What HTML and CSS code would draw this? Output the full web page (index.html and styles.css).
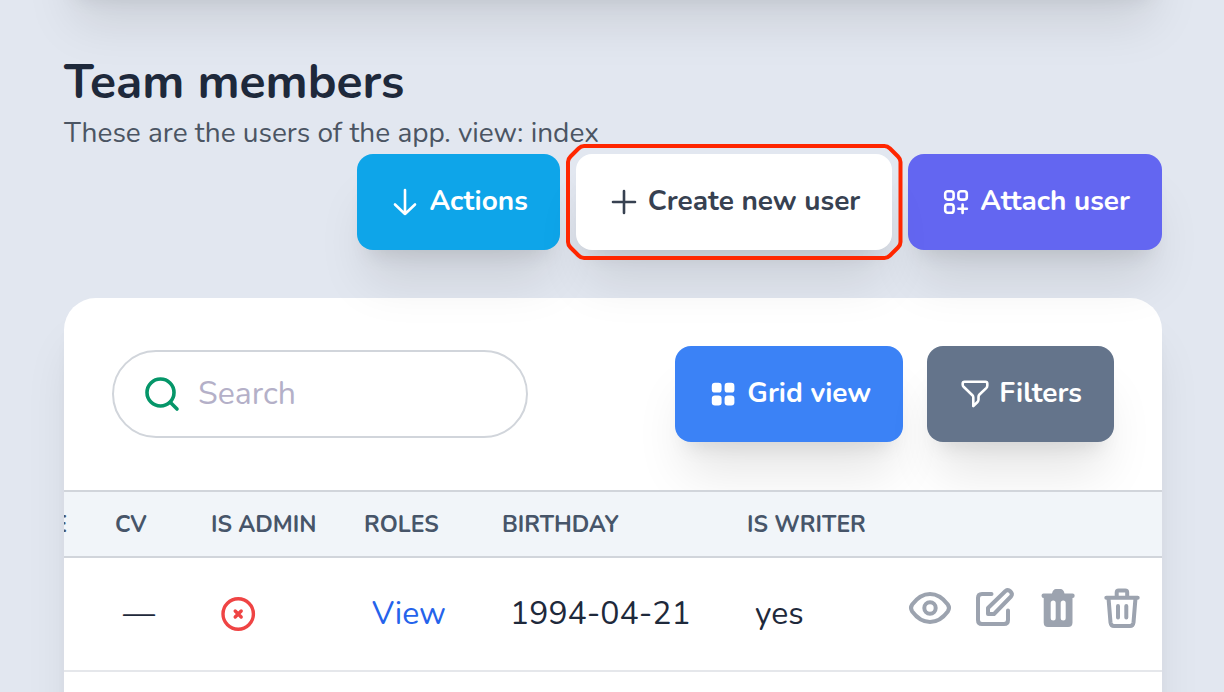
FILE: index.html
```html
<!DOCTYPE html>
<html lang="en">
<head>
  <meta charset="UTF-8">
  <meta name="viewport" content="width=device-width, initial-scale=1">
  <title>Team members</title>
  <link rel="stylesheet" href="styles.css">
</head>
<body>
  <main class="page">
    <div class="panel-end"></div>

    <header class="heading">
      <h1>Team members</h1>
      <p>These are the users of the app. view: index</p>
    </header>

    <div class="actions">
      <button type="button" class="btn btn-sky">
        <svg class="icon" viewBox="-2 -2 32 32" fill="none" stroke="currentColor" stroke-width="2.6" stroke-linecap="round" stroke-linejoin="round">
          <path d="M14 2v24M4 16.500l10 9.500 10-9.500"/>
        </svg>
        <span>Actions</span>
      </button>
      <div class="highlight">
        <button type="button" class="btn btn-white">
          <svg class="icon" viewBox="-2 -2 32 32" fill="none" stroke="currentColor" stroke-width="2.6" stroke-linecap="round">
            <path d="M14 3v22M3 14h22"/>
          </svg>
          <span>Create new user</span>
        </button>
        <svg class="highlight-ring" viewBox="0 0 336 116" preserveAspectRatio="none" aria-hidden="true">
          <path d="M18 2H318Q321 2 323.500 4.500L331.500 12.500Q334 15 334 18V98Q334 101 331.500 103.500L323.500 111.500Q321 114 318 114H18Q15 114 12.500 111.500L4.500 103.500Q2 101 2 98V18Q2 15 4.500 12.500L12.500 4.500Q15 2 18 2Z" fill="none" stroke="#ff2600" stroke-width="4" vector-effect="non-scaling-stroke"/>
        </svg>
      </div>
      <button type="button" class="btn btn-indigo">
        <svg class="icon" viewBox="-2 -2 32 32" fill="none" stroke="currentColor" stroke-width="2.6" stroke-linecap="round">
          <rect x="3.200" y="3.200" width="8.400" height="8.400" rx="2.600"/>
          <rect x="16.400" y="3.200" width="8.400" height="8.400" rx="2.600"/>
          <rect x="3.200" y="16.400" width="8.400" height="8.400" rx="2.600"/>
          <path d="M20.600 16.500v8.500M16.400 20.700h8.500"/>
        </svg>
        <span>Attach user</span>
      </button>
    </div>

    <section class="card">
      <div class="toolbar">
        <label class="search">
          <svg class="search-icon" viewBox="0 0 40 40" fill="none" stroke="currentColor" stroke-width="3.600" stroke-linecap="round">
            <circle cx="18.500" cy="18.500" r="13.500"/>
            <path d="M28.500 28.500l6.500 6.500"/>
          </svg>
          <input type="search" placeholder="Search" aria-label="Search">
        </label>
        <div class="toolbar-buttons">
          <button type="button" class="btn btn-blue">
            <svg class="icon" viewBox="-2 -2 32 32" fill="currentColor">
              <rect x="2.800" y="2.800" width="9.800" height="9.800" rx="3.200"/>
              <rect x="15.600" y="2.800" width="9.800" height="9.800" rx="3.200"/>
              <rect x="2.800" y="15.600" width="9.800" height="9.800" rx="3.200"/>
              <rect x="15.600" y="15.600" width="9.800" height="9.800" rx="3.200"/>
            </svg>
            <span>Grid view</span>
          </button>
          <button type="button" class="btn btn-slate">
            <svg class="icon" viewBox="-2 -2 32 32" fill="none" stroke="currentColor" stroke-width="2.6" stroke-linejoin="round">
              <path d="M3.500 1.800H24.500Q26.300 1.800 26.300 3.600V5.500Q26.300 7 25.200 8.100L18.500 14.500Q17.500 15.500 17.500 17V19.500Q17.500 21 16.500 22L12.300 26.200V17.500Q12.300 16.200 11.400 15.200L2.600 6.800Q1.700 5.900 1.700 4.700V3.600Q1.700 1.800 3.500 1.800Z"/>
            </svg>
            <span>Filters</span>
          </button>
        </div>
      </div>

      <div class="table-scroll">
        <table>
          <colgroup>
            <col class="col-file">
            <col class="col-cv">
            <col class="col-admin">
            <col class="col-roles">
            <col class="col-birthday">
            <col class="col-writer">
            <col>
          </colgroup>
          <thead>
            <tr>
              <th class="cut">E</th>
              <th>CV</th>
              <th>IS ADMIN</th>
              <th>ROLES</th>
              <th>BIRTHDAY</th>
              <th>IS WRITER</th>
              <th></th>
            </tr>
          </thead>
          <tbody>
            <tr>
              <td></td>
              <td>—</td>
              <td>
                <svg class="status-icon" viewBox="0 0 40 40" fill="none" stroke="currentColor" stroke-width="3.400" stroke-linecap="round" role="img" aria-label="No">
                  <circle cx="19.200" cy="20" r="15.200"/>
                  <path d="M16.200 17l6 6M22.200 17l-6 6"/>
                </svg>
              </td>
              <td><a href="#">View</a></td>
              <td>1994-04-21</td>
              <td>yes</td>
              <td class="row-actions">
                <div class="row-buttons">
                  <button type="button" aria-label="View">
                    <svg viewBox="0 0 42 40" fill="none" stroke="currentColor" stroke-width="4">
                      <path d="M4.200 16.500C9 10 15 6 22 6s13 4 17.800 10.500q2.400 3.500 0 7C35 30 29 34 22 34S9 30 4.200 23.500q-2.400-3.500 0-7z"/>
                      <circle cx="22" cy="20" r="5.700"/>
                    </svg>
                  </button>
                  <button type="button" aria-label="Edit">
                    <svg viewBox="0 0 42 40" fill="none" stroke="currentColor" stroke-width="4" stroke-linecap="round" stroke-linejoin="round">
                      <path d="M19.500 6H10Q6 6 6 10V32Q6 36 10 36H32Q36 36 36 32V22.500"/>
                      <path d="M16 26V20L33.500 3Q36 1 38.500 3.500Q41 6 39 8.500L22 26Z"/>
                    </svg>
                  </button>
                  <button type="button" aria-label="Delete">
                    <svg viewBox="0 0 42 40">
                      <path fill="currentColor" d="M16 5.500Q17 1 20 1H24.500Q27.500 1 28.500 5.500H36.500Q38.700 5.500 38.700 7.700T36.500 10V34.500Q36.500 39 32 39H12Q7.700 39 7.700 34.500V10Q5.500 10 5.500 7.700T7.700 5.500Z"/>
                      <path d="M17.200 15v15M27.200 15v15" fill="none" stroke="#fff" stroke-width="5" stroke-linecap="round"/>
                    </svg>
                  </button>
                  <button type="button" aria-label="Force delete">
                    <svg viewBox="0 0 42 40" fill="none" stroke="currentColor" stroke-width="4" stroke-linecap="round" stroke-linejoin="round">
                      <path d="M6.300 9.800H37.700M8.500 10L10.500 34.500Q11 38 14 38H30Q33 38 33.500 34.500L35.500 10M16.700 9.800V4.500Q16.700 2.500 18.700 2.500H25.200Q27.200 2.500 27.200 4.500V9.800M18 18V29.500M26.300 18V29.500"/>
                    </svg>
                  </button>
                </div>
              </td>
            </tr>
            <tr>
              <td colspan="7"></td>
            </tr>
          </tbody>
        </table>
      </div>
    </section>
  </main>
</body>
</html>
```
FILE: styles.css
```css
* {
  box-sizing: border-box;
}

body {
  margin: 0;
  min-height: 100vh;
  background: #e2e7f0;
  color: #1e293b;
  font-family: 'Nunito', 'Open Sans', sans-serif;
  overflow: hidden;
}

.page {
  padding: 0 62px 0 64px;
}

.panel-end,
.card {
  box-shadow: 0 40px 50px -10px rgba(0, 0, 0, 0.1), 0 16px 20px -12px rgba(0, 0, 0, 0.1);
}

.panel-end {
  height: 96px;
  margin-top: -104px;
}

.heading {
  padding-top: 62px;
}

h1 {
  margin: 0;
  font-size: 48px;
  line-height: 56px;
  font-weight: 700;
}

.heading p {
  margin: 2px 0 0;
  font-size: 28px;
  line-height: 42px;
  color: #4b5563;
}

.actions {
  display: flex;
  justify-content: flex-end;
  gap: 16px;
}

.btn {
  display: flex;
  align-items: center;
  justify-content: center;
  gap: 8px;
  height: 96px;
  padding: 0 32px;
  border: none;
  border-radius: 16px;
  color: #fff;
  font: inherit;
  font-size: 28px;
  font-weight: 700;
  white-space: nowrap;
  cursor: pointer;
  box-shadow: 0 40px 50px -10px rgba(0, 0, 0, 0.1), 0 16px 20px -12px rgba(0, 0, 0, 0.1);
}

.btn .icon {
  width: 32px;
  height: 32px;
}

.btn span {
  padding-bottom: 2px;
}

.btn-sky {
  background: #0ea5e9;
}

.btn-white {
  background: #fff;
  color: #374151;
}

.btn-indigo {
  background: #6366f1;
}

.btn-blue {
  background: #3b82f6;
}

.btn-slate {
  background: #64748b;
}

.highlight {
  position: relative;
}

.highlight-ring {
  position: absolute;
  top: -10px;
  left: -10px;
  width: calc(100% + 20px);
  height: calc(100% + 20px);
  overflow: visible;
  pointer-events: none;
}

.card {
  margin-top: 48px;
  background: #fff;
  border-radius: 32px;
  overflow: hidden;
}

.toolbar {
  display: flex;
  align-items: center;
  justify-content: space-between;
  padding: 48px;
}

.search {
  display: flex;
  align-items: center;
  gap: 16px;
  width: 416px;
  height: 88px;
  padding: 0 28px;
  border: 2px solid #d1d5db;
  border-radius: 44px;
}

.search-icon {
  flex: none;
  width: 40px;
  height: 40px;
  color: #059669;
}

.search input {
  flex: 1;
  min-width: 0;
  padding: 0 0 2px;
  border: none;
  outline: none;
  background: none;
  font: inherit;
  font-size: 32px;
}

.search input::placeholder {
  color: #b4b0c8;
}

.toolbar-buttons {
  display: flex;
  gap: 24px;
}

/* scrolled to its right end, so the first column is cut off */
.table-scroll {
  display: flex;
  justify-content: flex-end;
  overflow: hidden;
}

table {
  flex: none;
  width: calc(100% + 40px);
  table-layout: fixed;
  border-collapse: separate;
  border-spacing: 0;
}

.col-file {
  width: 67px;
}

.col-cv {
  width: 96px;
}

.col-admin {
  width: 153px;
}

.col-roles {
  width: 138px;
}

.col-birthday {
  width: 245px;
}

.col-writer {
  width: 167px;
}

th {
  height: 68px;
  padding: 0 0 0 24px;
  border-top: 2px solid #d1d5db;
  border-bottom: 2px solid #d1d5db;
  background: #f1f5f9;
  color: #475569;
  font-size: 23px;
  font-weight: 700;
  text-align: left;
  white-space: nowrap;
}

th.cut {
  padding: 0 24px 0 0;
  text-align: right;
}

td {
  height: 114px;
  padding: 0 0 2px 32px;
  border-bottom: 2px solid #e5e7eb;
  font-size: 32px;
  white-space: nowrap;
}

td a {
  color: #2563eb;
  text-decoration: none;
}

.status-icon {
  display: block;
  width: 40px;
  height: 40px;
  margin-top: 2px;
  color: #ef4444;
}

td.row-actions {
  padding: 0 20px 12px 0;
}

.row-buttons {
  display: flex;
  justify-content: flex-end;
  gap: 22px;
}

.row-buttons button {
  padding: 0;
  border: none;
  background: none;
  color: #9ca3af;
  cursor: pointer;
}

.row-buttons svg {
  display: block;
  width: 42px;
  height: 40px;
  overflow: visible;
}
```
